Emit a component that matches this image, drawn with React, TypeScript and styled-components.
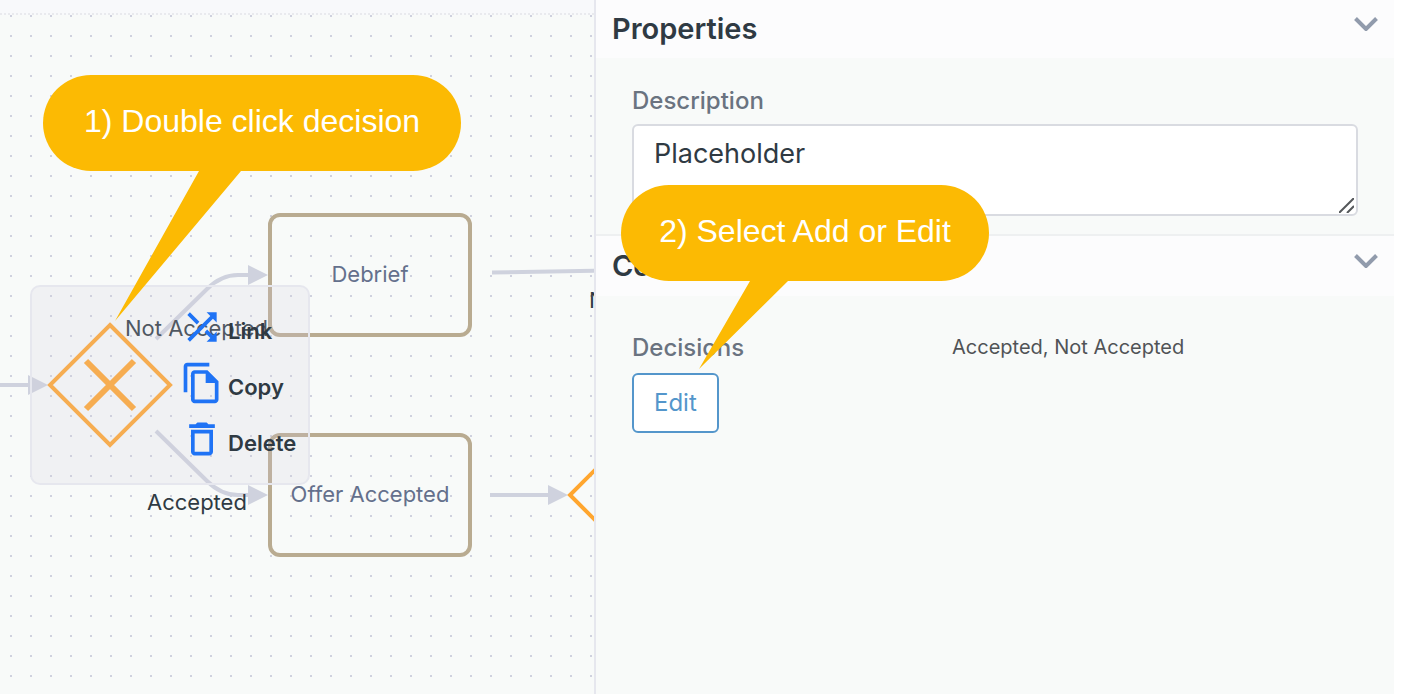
import React from 'react';
import styled, { createGlobalStyle } from 'styled-components';

const GlobalStyle = createGlobalStyle`
  *, *::before, *::after { box-sizing: border-box; }
  body {
    margin: 0;
    background: #ffffff;
    color: #2f3a43;
    font-family: Inter, "Liberation Sans", sans-serif;
  }
  h2, p { margin: 0; }
`;

const Page = styled.div`
  display: flex;
  min-height: 100vh;
  padding-right: 8px;
  overflow: hidden;
`;

const Workspace = styled.main`
  flex: 1 1 0;
  min-width: 0;
  display: flex;
  flex-direction: column;
`;

const Toolbar = styled.div`
  height: 15px;
  background: #f8f9fb;
  border-bottom: 2px dotted #e9eaee;
`;

const Canvas = styled.div`
  position: relative;
  flex: 1;
  overflow: hidden;
  background-color: #f8faf9;
  background-image: conic-gradient(from 90deg at 18px 18px, #cfd1de 90deg, transparent 0);
  background-size: 20px 20px;
  background-position: -8px -18px;
`;

const Edges = styled.svg`
  position: absolute;
  top: 0;
  left: 0;
  overflow: visible;
`;

const TaskNode = styled.div<{ $x: number; $y: number }>`
  position: absolute;
  left: ${(p) => p.$x}px;
  top: ${(p) => p.$y}px;
  width: 204px;
  height: 124px;
  display: flex;
  align-items: center;
  justify-content: center;
  padding-bottom: 2px;
  border: 4px solid #b9ab91;
  border-radius: 12px;
  color: #64708c;
  font-size: 22px;
  line-height: 28px;
  white-space: nowrap;
`;

const EdgeLabel = styled.span<{ $x: number; $y: number }>`
  position: absolute;
  left: ${(p) => p.$x}px;
  top: ${(p) => p.$y}px;
  font-size: 22px;
  line-height: 28px;
  white-space: nowrap;
`;

const NodeMenu = styled.div`
  position: absolute;
  left: 30px;
  top: 270px;
  width: 280px;
  height: 200px;
  padding: 18px 0 0 148px;
  display: flex;
  flex-direction: column;
  gap: 12px;
  background: rgba(208, 206, 220, 0.2);
  border: 2px solid #e6e7ee;
  border-radius: 10px;
`;

const MenuItem = styled.button`
  display: flex;
  align-items: flex-end;
  gap: 4px;
  height: 44px;
  padding: 0;
  border: 0;
  background: none;
  color: #2f3a43;
  font: 600 22px/36px Inter, "Liberation Sans", sans-serif;
  white-space: nowrap;
  cursor: pointer;
`;

const MenuIcon = styled.svg`
  flex: none;
  width: 44px;
  height: 44px;
  fill: #1f73f5;
`;

const Panel = styled.aside`
  position: relative;
  flex: 0 0 800px;
  border-left: 2px solid #e6e7ee;
  background: #f8faf9;
`;

const Section = styled.section`
  & + & { border-top: 2px solid #eef0f1; }
`;

const SectionHeader = styled.header<{ $height: number }>`
  display: flex;
  align-items: center;
  justify-content: space-between;
  height: ${(p) => p.$height}px;
  padding: 0 16px;
  background: #fcfcfd;
`;

const SectionTitle = styled.h2`
  font-size: 29px;
  font-weight: 600;
  line-height: 36px;
`;

const Toggle = styled.button`
  display: flex;
  padding: 0 0 10px;
  border: 0;
  background: none;
  cursor: pointer;
`;

const SectionBody = styled.div`
  padding: 26px 36px 18px;
`;

const PropertyBody = styled.div`
  display: grid;
  grid-template-columns: 320px 1fr;
  row-gap: 8px;
  padding: 35px 36px;
`;

const fieldLabel = `
  display: block;
  color: #6a7380;
  font-size: 24px;
  font-weight: 500;
  line-height: 34px;
`;

const Label = styled.label`${fieldLabel}`;
const PropertyName = styled.p`${fieldLabel}`;

const PropertyValue = styled.p`
  color: #505356;
  font-size: 20px;
  line-height: 32px;
`;

const TextAreaWrap = styled.div`
  position: relative;
  margin-top: 6px;
`;

const TextArea = styled.textarea`
  display: block;
  width: 100%;
  height: 92px;
  padding: 10px 20px;
  border: 2px solid #d9dbe1;
  border-radius: 6px;
  background: #ffffff;
  color: #2f3a43;
  font: 400 27px/36px Inter, "Liberation Sans", sans-serif;
  resize: none;
  outline: 0;
`;

const Grip = styled.svg`
  position: absolute;
  right: 4px;
  bottom: 3px;
`;

const EditButton = styled.button`
  justify-self: start;
  height: 60px;
  padding: 0 20px;
  border: 2px solid #5496cb;
  border-radius: 6px;
  background: #ffffff;
  color: #5496cb;
  font: 400 24px/32px Inter, "Liberation Sans", sans-serif;
  cursor: pointer;
`;

const Callout = styled.div<{ $x: number; $y: number; $width: number }>`
  position: absolute;
  z-index: 2;
  left: ${(p) => p.$x}px;
  top: ${(p) => p.$y}px;
  width: ${(p) => p.$width}px;
  height: 96px;
  padding-top: 28px;
  border-radius: 48px;
  background: #fcba03;
  color: #ffffff;
  font-family: "Liberation Sans", Arial, sans-serif;
  font-size: 32px;
  line-height: 36px;
  text-align: center;
  white-space: nowrap;
`;

const Pointer = styled.svg`
  position: absolute;
  top: 0;
  left: 0;
  overflow: visible;
  fill: #fcba03;
`;

const Chevron = () => (
  <svg width="24" height="14" viewBox="0 0 24 14" fill="none" stroke="#919bac" strokeWidth="4">
    <path d="M1.500 1.500 12 12 22.500 1.500" />
  </svg>
);

const icons = {
  Link: 'M10.59 9.17L5.41 4 4 5.41l5.17 5.17 1.42-1.41zM14.5 4l2.04 2.04L4 18.59 5.41 20 17.96 7.46 20 9.5V4h-5.5zm.33 9.41l-1.41 1.41 3.13 3.13L14.5 20H20v-5.5l-2.04 2.04-3.13-3.13z',
  Copy: 'M16 1H4c-1.1 0-2 .9-2 2v14h2V3h12V1zm-1 4l6 6v10c0 1.1-.9 2-2 2H7.99C6.89 23 6 22.1 6 21V7c0-1.1.89-2 1.99-2H15zM8 7v14h11v-9h-5V7H8z',
  Delete: 'M6 19c0 1.1.9 2 2 2h8c1.1 0 2-.9 2-2V7H6v12zM8 9h8v10H8V9zm7.5-5l-1-1h-5l-1 1H5v2h14V4h-3.5z',
};

export default function App() {
  return (
    <Page>
      <GlobalStyle />
      <Workspace>
        <Toolbar />
        <Canvas>
          <Edges width="594" height="679" viewBox="0 15 594 679" fill="none" aria-hidden="true">
            <g stroke="#cfd2de" strokeWidth="4">
              <path d="M0 385H29" />
              <path d="M156 339 207 289Q221 275 238 275H249" />
              <path d="M156 431 207 481Q221 495 238 495H249" />
              <path d="M492 272.500 640 270" />
              <path d="M490 495H549" />
            </g>
            <g fill="#cfd2de">
              <path d="M28 375 48 385 28 395z" />
              <path d="M248 265 268 275 248 285z" />
              <path d="M248 485 268 495 248 505z" />
              <path d="M548 485 568 495 548 505z" />
            </g>
            <g stroke="#ffa62f">
              <path d="M110 325 170 385 110 445 50 385z" strokeWidth="4" />
              <path d="M86 361 134 409M134 361 86 409" strokeWidth="6" />
              <path d="M630 435 690 495 630 555 570 495z" strokeWidth="4" />
            </g>
          </Edges>
          <TaskNode $x={268} $y={198}>Debrief</TaskNode>
          <TaskNode $x={268} $y={418}>Offer Accepted</TaskNode>
          <EdgeLabel $x={125} $y={299}>Not Accepted</EdgeLabel>
          <EdgeLabel $x={147} $y={473}>Accepted</EdgeLabel>
          <EdgeLabel $x={589} $y={271}>Not Accepted</EdgeLabel>
          <NodeMenu>
            {Object.entries(icons).map(([name, d]) => (
              <MenuItem type="button" key={name}>
                <MenuIcon viewBox="0 0 24 24" aria-hidden="true">
                  <path fillRule="evenodd" d={d} />
                </MenuIcon>
                {name}
              </MenuItem>
            ))}
          </NodeMenu>
          <Callout $x={43} $y={60} $width={418}>
            <Pointer width="418" height="96" viewBox="43 75 418 96" aria-hidden="true">
              <path d="M200 168H244L241 171 115 321 199 171z" />
            </Pointer>
            1) Double click decision
          </Callout>
        </Canvas>
      </Workspace>
      <Panel>
        <Section>
          <SectionHeader $height={58}>
            <SectionTitle>Properties</SectionTitle>
            <Toggle type="button" aria-label="Toggle properties"><Chevron /></Toggle>
          </SectionHeader>
          <SectionBody>
            <Label htmlFor="description">Description</Label>
            <TextAreaWrap>
              <TextArea id="description" defaultValue="Placeholder" />
              <Grip width="15" height="15" viewBox="0 0 15 15" fill="none" stroke="#55585b" strokeWidth="2" aria-hidden="true">
                <path d="M0 15 15 0M8 15 15 8" />
              </Grip>
            </TextAreaWrap>
          </SectionBody>
        </Section>
        <Section>
          <SectionHeader $height={60}>
            <SectionTitle>Conditions</SectionTitle>
            <Toggle type="button" aria-label="Toggle conditions"><Chevron /></Toggle>
          </SectionHeader>
          <PropertyBody>
            <PropertyName>Decisions</PropertyName>
            <PropertyValue>Accepted, Not Accepted</PropertyValue>
            <EditButton type="button">Edit</EditButton>
          </PropertyBody>
        </Section>
        <Callout $x={25} $y={185} $width={368}>
          <Pointer width="368" height="96" viewBox="621 185 368 96" aria-hidden="true">
            <path d="M750 278H792L788 281 699 369 750 281z" />
          </Pointer>
          2) Select Add or Edit
        </Callout>
      </Panel>
    </Page>
  );
}
